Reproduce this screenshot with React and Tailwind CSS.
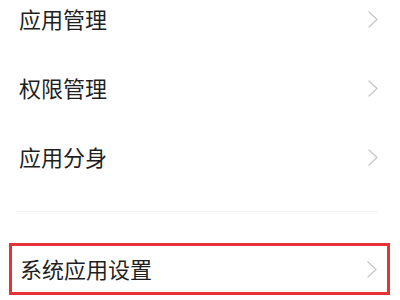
import React from "react";

function Chevron() {
  return (
    <svg width="10" height="17" viewBox="0 0 10 17" fill="none" className="shrink-0">
      <polyline points="1,1 9,8.5 1,16" stroke="#c9c9c9" strokeWidth="1.4" strokeLinecap="round" strokeLinejoin="round" />
    </svg>
  );
}

function Row({ label }) {
  return (
    <div className="h-[69px] flex items-center justify-between pl-[19px] pr-[22px]">
      <span className="text-[22px] leading-none text-[#1f1f1f] pb-[4px]">{label}</span>
      <Chevron />
    </div>
  );
}

export default function App() {
  return (
    <div
      className="w-[400px] h-[300px] overflow-hidden bg-white"
      style={{ fontFamily: '"Noto Sans CJK SC", "Noto Sans", sans-serif' }}
    >
      <div className="-mt-[15px]">
        <Row label="应用管理" />
        <Row label="权限管理" />
        <Row label="应用分身" />
      </div>
      <div className="mt-[19px] ml-[16px] mr-[22px] h-px bg-[#f2f2f2]" />
      <div className="mt-[31px] ml-[9px] w-[381px] h-[52px] border-[3px] border-[#e63338] flex items-center justify-between pl-[8px] pr-[10px]">
        <span className="text-[22px] leading-none text-[#1f1f1f] pb-[2px]">系统应用设置</span>
        <Chevron />
      </div>
    </div>
  );
}
